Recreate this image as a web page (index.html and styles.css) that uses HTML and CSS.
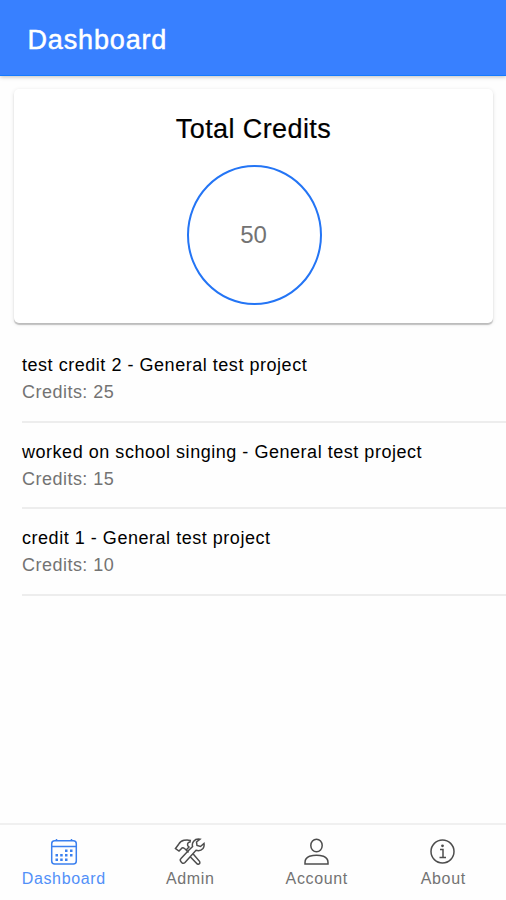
FILE: index.html
```html
<!DOCTYPE html>
<html lang="en">
  <head>
    <meta charset="UTF-8" />
    <meta name="viewport" content="width=device-width, initial-scale=1.0" />
    <title>Dashboard</title>
    <link rel="stylesheet" href="styles.css">
  </head>
  <body>
    <header class="header">
      <h1>Dashboard</h1>
    </header>
    <main class="content">
      <section class="card">
        <h2>Total Credits</h2>
        <div class="circle"><span>50</span></div>
      </section>
      <ul class="list">
        <li class="item">
          <h3>test credit 2 - General test project</h3>
          <p>Credits: 25</p>
        </li>
        <li class="item">
          <h3>worked on school singing - General test project</h3>
          <p>Credits: 15</p>
        </li>
        <li class="item">
          <h3>credit 1 - General test project</h3>
          <p>Credits: 10</p>
        </li>
      </ul>
    </main>
    <nav class="tabs">
      <a class="tab active">
        <svg viewBox="0 0 28 28">
          <rect x="1.7" y="2.7" width="24.6" height="23.3" rx="3" />
          <path d="M2 8.5h24M6.5 1v2M21.5 1v2" />
          <path class="dots" d="M15 11.500h2.500V14H15zM20 11.500h2.500V14H20zM5.500 16h2.500v2.500H5.500zM10.200 16h2.500v2.500h-2.500zM15 16h2.500v2.500H15zM20 16h2.500v2.500H20zM5.500 20.500h2.500V23H5.500zM10.200 20.500h2.500V23h-2.500zM15 20.500h2.500V23H15z" />
        </svg>
        <span>Dashboard</span>
      </a>
      <a class="tab">
        <svg class="tools" viewBox="0 0 32 28">
          <path d="M14.500 12.500L7 20.500Q5.500 22 7 23.700L8 24.800Q9.500 26 11 24.500L22 12.300Q26.500 13.500 29 10.500Q30.500 8.500 30 5.500L26.500 8.500L23 7.500L22.500 4L26 1.200Q22 .500 19.700 3.200Q17.700 5.700 18.600 8.600L14.500 12.500" />
          <path d="M1.500 10.500L4.500 6.500Q6.500 3 10 2.300Q13.500 1.700 16.300 2.400L16 4Q13 4.500 13.700 7.700L15 9L12.200 12L10.500 10.500Q8.500 9 7.500 10.500L5 13Z" />
          <path d="M19.200 16L25.500 23.300Q26.500 25.500 24.800 26Q23.500 26.500 22.500 25.200L16.200 18.700M12.200 12L14.500 14.500" />
        </svg>
        <span>Admin</span>
      </a>
      <a class="tab">
        <svg viewBox="0 0 28 28">
          <ellipse cx="13.500" cy="7.500" rx="5.700" ry="6.300" />
          <path d="M2 26V24.500Q2 20 6.500 18.300Q13.500 16 20.500 18.300Q25 20 25 24.500V26Z" />
        </svg>
        <span>Account</span>
      </a>
      <a class="tab">
        <svg viewBox="0 0 28 28">
          <circle cx="13.500" cy="13.500" r="11.500" />
          <path d="M11 11.500h3v8M10.500 19.500H17" />
          <circle class="dots" cx="13.500" cy="7.800" r="1.400" />
        </svg>
        <span>About</span>
      </a>
    </nav>
  </body>
</html>
```
FILE: styles.css
```css
* {
  margin: 0;
  padding: 0;
  box-sizing: border-box;
}
body {
  display: flex;
  flex-direction: column;
  height: 100vh;
  overflow: hidden;
  font-family: "Liberation Sans", Arial, sans-serif;
  background-color: #fefefe;
  color: #000;
}
.header {
  display: flex;
  align-items: center;
  height: 76px;
  padding: 5px 28px 0 27.5px;
  background-color: #3880ff;
  border-bottom: 1px solid #147aff;
  box-shadow: 0 1px 4px rgba(0, 0, 0, 0.25);
}
.header h1 {
  font-size: 27px;
  font-weight: 400;
  letter-spacing: 0.85px;
  color: #fff;
  -webkit-text-stroke: 0.5px #fff;
}
.content {
  flex: 1;
  padding-top: 13px;
}
.card {
  display: flex;
  flex-direction: column;
  align-items: center;
  height: 234px;
  margin: 0 13px 0 14px;
  padding-top: 25px;
  background-color: #fff;
  border-radius: 5px;
  box-shadow: 0 2px 1px rgba(0, 0, 0, 0.2), 0 1px 4px rgba(0, 0, 0, 0.12);
}
.card h2 {
  font-size: 27px;
  line-height: 30px;
  font-weight: 400;
  letter-spacing: 0.4px;
  -webkit-text-stroke: 0.2px #000;
}
.circle {
  display: flex;
  align-items: center;
  justify-content: center;
  width: 135px;
  height: 140px;
  margin: 21px 0 0 2px;
  padding-right: 2px;
  border: 2px solid #2475f5;
  border-radius: 50%;
  font-size: 24px;
  color: #737373;
}
.list {
  margin-top: 13px;
  list-style: none;
}
.item {
  height: 86.5px;
  margin-left: 22px;
  padding-top: 16px;
  border-bottom: 2px solid #ededed;
}
.item h3 {
  font-size: 18px;
  line-height: 27px;
  font-weight: 400;
  letter-spacing: 0.53px;
}
.item p {
  font-size: 18px;
  line-height: 27px;
  letter-spacing: 0.48px;
  color: #737373;
}
.tabs {
  display: flex;
  height: 77px;
  border-top: 2px solid #f0f0f0;
}
.tab {
  flex: 1;
  display: flex;
  flex-direction: column;
  align-items: center;
  padding: 13px 0 0 1px;
  font-size: 16px;
  line-height: 20px;
  letter-spacing: 0.65px;
  color: #737373;
}
.tab svg {
  width: 28px;
  height: 28px;
  margin-bottom: 3px;
  fill: none;
  stroke: #4d4d4d;
  stroke-width: 1.5;
}
.tab .tools {
  width: 32px;
}
.tab .dots {
  fill: #4d4d4d;
  stroke: none;
}
.tab.active {
  color: #5290f8;
}
.tab.active svg {
  stroke: #3b80ef;
}
.tab.active .dots {
  fill: #3b80ef;
}
```
